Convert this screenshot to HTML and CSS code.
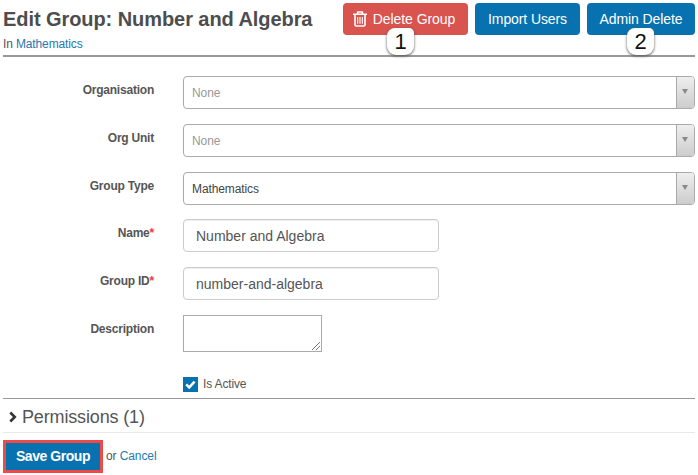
FILE: index.html
```html
<!DOCTYPE html>
<html lang="en">
<head>
<meta charset="utf-8">
<title>Edit Group</title>
<link rel="stylesheet" href="styles.css">
</head>
<body>
<header class="header">
  <div class="heading">
    <h1>Edit Group: Number and Algebra</h1>
    <p class="crumb">In <a href="#">Mathematics</a></p>
  </div>
  <div class="actions">
    <button class="btn danger"><svg class="trash" viewBox="0 0 14 16" fill="none" stroke="#fff"><path stroke-width="1.6" d="M0 3.3h14M4.6 3V1h4.8v2M2 3.5v10.2q0 1.3 1.3 1.3h7.4q1.3 0 1.3-1.3V3.5"/><path stroke-width="1.1" d="M4.7 6v6.7M7 6v6.7M9.3 6v6.7"/></svg><span>Delete Group</span><b class="badge one">1</b></button>
    <button class="btn import"><span>Import Users</span></button>
    <button class="btn admin"><span>Admin Delete</span><b class="badge two">2</b></button>
  </div>
</header>
<main class="form">
  <div class="row"><label>Organisation</label><div class="select muted"><span>None</span><i class="arrow"></i></div></div>
  <div class="row"><label>Org Unit</label><div class="select muted"><span>None</span><i class="arrow"></i></div></div>
  <div class="row"><label>Group Type</label><div class="select"><span>Mathematics</span><i class="arrow"></i></div></div>
  <div class="row"><label>Name<em>*</em></label><div class="input">Number and Algebra</div></div>
  <div class="row"><label>Group ID<em>*</em></label><div class="input">number-and-algebra</div></div>
  <div class="row"><label>Description</label><div class="textarea"><svg viewBox="0 0 8 8" stroke="#777"><path d="M0 8L8 0M4 8l4-4"/></svg></div></div>
</main>
<div class="active"><span class="check"><svg viewBox="0 0 15 15"><path d="M3.2 7.4l3 3 5.4-5.8" fill="none" stroke="#fff" stroke-width="2.4"/></svg></span><span class="check-label">Is Active</span></div>
<section class="permissions"><svg viewBox="0 0 8 12"><path d="M1.3 1.5L5.8 6l-4.5 4.5" fill="none" stroke="#333" stroke-width="2.5"/></svg><h2>Permissions (1)</h2></section>
<footer class="footer"><button class="save">Save Group</button><span class="or">or <a href="#">Cancel</a></span></footer>
</body>
</html>
```
FILE: styles.css
```css
* { box-sizing: border-box; }
body { margin: 0; padding: 3px 3px 0; width: 698px; height: 475px; overflow: hidden; background: #fff; color: #555; font: 12px/16px "Liberation Sans", Arial, sans-serif; }
h1, h2, p { margin: 0; font-weight: normal; }
a { color: #2877ad; text-decoration: none; }
button { font-family: inherit; border: 0; padding: 0; color: #fff; }
.header { display: flex; justify-content: space-between; width: 692px; height: 54px; border-bottom: 2px solid #999; }
.heading { white-space: nowrap; }
h1 { font-size: 20px; line-height: 24px; font-weight: bold; color: #4d4d4d; padding-top: 4px; letter-spacing: -.07px; }
.crumb { padding-top: 5px; letter-spacing: -.13px; }
.actions { display: flex; gap: 7px; }
.btn { position: relative; display: flex; align-items: center; justify-content: center; height: 32px; border-radius: 4px; background: #0872b1; font-size: 14px; white-space: nowrap; }
.danger { width: 125px; background: #d9534f; gap: 6px; padding-right: 3px; }
.danger span { letter-spacing: -.05px; }
.import { width: 105px; letter-spacing: -.1px; }
.admin { width: 108px; letter-spacing: -.1px; }
.trash { width: 14px; height: 16px; }
.badge { position: absolute; top: 25px; width: 27px; height: 27px; border-radius: 8px 5px 9px 9px; background: #fff; box-shadow: 0 1px 3px #555; color: #111; font-size: 22px; line-height: 28px; font-weight: normal; text-align: center; letter-spacing: 0; }
.one { left: 44px; }
.two { left: 40px; }
.form { display: flex; flex-direction: column; gap: 14.75px; padding-top: 19px; }
.row { display: grid; grid-template-columns: 151px 512px; column-gap: 29px; height: 33px; }
label { font-weight: bold; text-align: right; padding-top: 6px; color: #555; letter-spacing: -.22px; }
em { color: #f33; font-style: normal; }
.select { display: flex; justify-content: space-between; height: 33px; border: 1px solid #aaa; border-radius: 4px; color: #444; line-height: 33px; padding-left: 8px; letter-spacing: -.1px; }
.muted { color: #999; }
.arrow { width: 18px; border-left: 1px solid #aaa; border-radius: 0 3px 3px 0; background: linear-gradient(#eee, #ccc); }
.arrow::before { content: ""; display: block; margin: 12px auto 0 5px; width: 0; border: 3px solid transparent; border-top: 5px solid #888; border-bottom: 0; }
.input { width: 256px; height: 33px; border: 1px solid #ccc; border-radius: 4px; font-size: 14px; line-height: 32px; padding-left: 12px; box-shadow: inset 0 1px 1px #eee; }
.textarea { display: flex; align-items: flex-end; justify-content: flex-end; width: 139px; height: 37px; border: 1px solid #aaa; padding: 1px; }
.textarea svg { width: 8px; height: 8px; }
.active { display: flex; align-items: center; gap: 5px; height: 15px; margin: 29px 0 0 180px; }
.check { width: 15px; height: 15px; background: #0872b1; }
.check svg { display: block; }
.check-label { letter-spacing: -.15px; }
.permissions { display: flex; align-items: center; gap: 5px; width: 692px; height: 35px; margin-top: 6px; padding-left: 6px; border-top: 1px solid #999; border-bottom: 1px solid #e8e8e8; }
.permissions svg { width: 8px; height: 12px; margin-top: 4px; }
h2 { font-size: 18px; line-height: 24px; color: #555; padding-top: 3px; letter-spacing: -.15px; }
.footer { display: flex; align-items: center; gap: 3px; margin-top: 7px; }
.save { width: 100px; height: 33px; background: #0872b1; border: 3px solid #ed4b47; font-size: 14px; font-weight: bold; letter-spacing: -.45px; }
.or { letter-spacing: -.1px; }
```
